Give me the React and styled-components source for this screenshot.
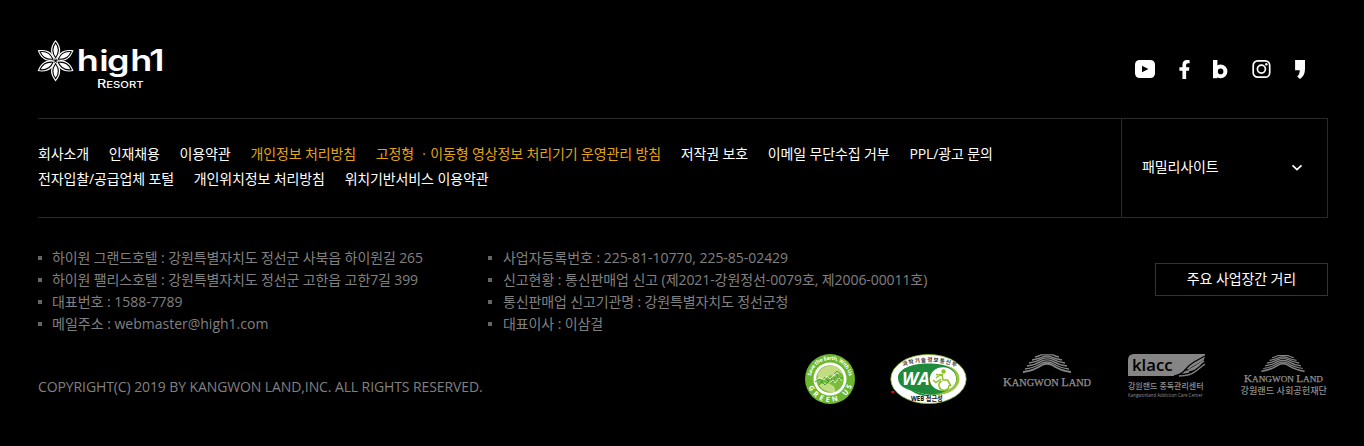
import React from 'react';
import styled, { createGlobalStyle } from 'styled-components';
import { FaFacebookF } from 'react-icons/fa';

const GlobalStyle = createGlobalStyle`
  * { box-sizing: border-box; }
  body {
    margin: 0;
    background: #000;
    color: #fff;
    font-family: "Open Sans", "Noto Sans CJK KR", sans-serif;
    font-size: 14px;
  }
  ul { list-style: none; margin: 0; padding: 0; }
  a { color: inherit; text-decoration: none; }
  svg { display: block; flex: none; overflow: visible; }
`;

const Footer = styled.footer`
  height: 446px;
  padding: 0 36px 0 38px;
  background: #000;
`;

const Top = styled.div`
  display: flex;
  justify-content: space-between;
  align-items: flex-start;
  height: 118px;
  padding: 40px 22px 0 0;
`;

const Social = styled.ul`
  display: flex;
  align-items: center;
  margin-top: 19px;
  gap: 22px;
`;

const SocialItem = styled.li`
  display: flex;
  justify-content: center;
  width: ${(p) => p.$w}px;
  color: #fff;
`;

const LinkBar = styled.div`
  display: flex;
  height: 100px;
  border: 1px solid #2a2a2a;
  border-left: 0;
`;

const Links = styled.ul`
  display: flex;
  flex: 1;
  flex-wrap: wrap;
  align-content: flex-start;
  column-gap: 19.8px;
  padding-top: 22px;
`;

const LinkItem = styled.li`
  line-height: 25px;
  letter-spacing: -0.13px;
  white-space: nowrap;
  color: ${(p) => (p.$accent ? '#e3a412' : '#fff')};
`;

const Family = styled.button`
  display: flex;
  align-items: center;
  justify-content: space-between;
  width: 206px;
  padding: 0 24px 4px 20px;
  border: 0;
  border-left: 1px solid #2a2a2a;
  background: none;
  color: #fff;
  font: inherit;
  letter-spacing: -0.13px;
`;

const Info = styled.div`
  display: flex;
  padding-top: 29px;
`;

const InfoList = styled.ul`
  width: ${(p) => p.$w}px;
`;

const InfoItem = styled.li`
  display: flex;
  align-items: center;
  gap: ${(p) => p.$gap || 10}px;
  height: 22px;
  line-height: 22px;
  letter-spacing: ${(p) => p.$tracking}px;
  color: #808080;
  white-space: nowrap;

  &::before {
    content: "";
    width: 4px;
    height: 4px;
    background: #666;
  }
`;

const Distance = styled.a`
  width: 173px;
  height: 33px;
  margin: 16px 0 0 auto;
  border: 1px solid #333;
  line-height: 30px;
  letter-spacing: -0.1px;
  text-align: center;
`;

const Bottom = styled.div`
  display: flex;
  justify-content: space-between;
  align-items: flex-start;
  padding-top: 19px;
`;

const Copyright = styled.p`
  margin: 23px 0 0;
  line-height: 20px;
  letter-spacing: -0.1px;
  color: #808080;
`;

const Marks = styled.div`
  display: flex;
  align-items: flex-start;
`;

const Mark = styled.div`
  margin-left: ${(p) => p.$gap || 0}px;
`;

const Label = styled.text`
  font-family: ${(p) => p.$family || '"Open Sans", "Noto Sans CJK KR", sans-serif'};
  font-size: ${(p) => p.$size}px;
  font-weight: ${(p) => p.$weight || 400};
  font-style: ${(p) => (p.$italic ? 'italic' : 'normal')};
  fill: ${(p) => p.$color || '#fff'};
`;

const SmallCap = styled.tspan`
  font-size: ${(p) => p.$size}px;
`;

const petalAngles = [0, 60, 120, 180, 240, 300];

function Logo() {
  return (
    <svg width="126" height="50" viewBox="0 0 126 50" role="img">
      <g transform="translate(17.6 20.7)">
        {petalAngles.map((a) => (
          <g key={a} transform={`rotate(${a})`}>
            <path d="M0 -1C-5.6 -6 -6.6 -13 0 -20.7C6.6 -13 5.6 -6 0 -1Z" fill="#fff" />
            <path d="M0 -3C-3.6 -8 -3.9 -13 0 -18C3.9 -13 3.6 -8 0 -3Z" fill="#fff" stroke="#000" strokeWidth="1.1" />
          </g>
        ))}
      </g>
      <g transform="scale(1.22 1)">
        <Label x="31.800 50.200 56.500 75.600 91.300" y="31" $size="29.5" $weight="600" $family="Inter, sans-serif">high1</Label>
      </g>
      <Label x="59" y="47.700" $size="11.500" $weight="500" textLength="46.500" lengthAdjust="spacingAndGlyphs" $family="Inter, sans-serif">
        R<SmallCap $size={9}>ESORT</SmallCap>
      </Label>
    </svg>
  );
}

function YoutubeIcon() {
  return (
    <svg width="20" height="20" viewBox="0 0 20 20">
      <path fillRule="evenodd" fill="#fff" d="M5 1H15Q20 1 20 6V14Q20 19 15 19H5Q0 19 0 14V6Q0 1 5 1ZM7 6.700V13.300L13.400 10Z" />
    </svg>
  );
}

function BandIcon() {
  return (
    <svg width="15" height="20" viewBox="0 0 15 20">
      <rect x="0" y="1" width="4.400" height="18.200" fill="#fff" />
      <circle cx="7.600" cy="12.400" r="4.800" fill="none" stroke="#fff" strokeWidth="4" />
    </svg>
  );
}

function InstagramIcon() {
  return (
    <svg width="19" height="20" viewBox="0 0 19 20" fill="none" stroke="#fff" strokeWidth="1.700">
      <rect x="1.200" y="1.900" width="16.500" height="16.300" rx="4.500" />
      <circle cx="9.400" cy="10.100" r="4" />
      <circle cx="14.300" cy="5.300" r="1.200" fill="#fff" stroke="none" />
    </svg>
  );
}

function StoryIcon() {
  return (
    <svg width="11" height="20" viewBox="0 0 11 20">
      <path fill="#fff" d="M.1 1H10V9.800C10 14.500 8.500 17.700 5 20L2.200 17.500C4.100 15.800 4.700 13.900 4.800 11.300H.1Z" />
    </svg>
  );
}

function Chevron() {
  return (
    <svg width="12" height="8" viewBox="0 0 12 8">
      <path d="M1.500 3.300L6 7.600L10.500 3.300" fill="none" stroke="#fff" strokeWidth="1.700" />
    </svg>
  );
}

function GreenMark() {
  return (
    <svg width="50" height="50" viewBox="0 0 50 50">
      <defs>
        <path id="green-top" d="M5.800 25A19.200 19.200 0 0 1 44.200 25" />
        <path id="green-bottom" d="M2 25A23 23 0 0 0 48 25" />
      </defs>
      <circle cx="25" cy="25" r="25" fill="#6cb72f" />
      <circle cx="25" cy="25" r="16.500" fill="#fff" />
      <circle cx="25" cy="25" r="13.800" fill="#79bd3a" />
      <path d="M12.500 20Q17 11.500 26 11.500Q35 12 38 21L35 19L31 23L25 21L20 25L13 25ZM14 31Q20 27 27 31Q31 33 30 38Q19 39 14 31Z" fill="#c3dc82" />
      <path d="M10 28L14 25L17 28L20 23L23 27L26 24L28 28L32 20L34 26L38 23M14 31L17 28L20 31L24 27M29 20L32 17L36 20" fill="none" stroke="#3c9a3c" strokeWidth=".9" />
      <path d="M11 26L15 23.500L19 26L22 22L25 25L30 20M24 29L28 26L30 29L34 24L37 27" fill="none" stroke="#eef6dc" strokeWidth=".8" />
      <Label $size="5.200" $weight="700"><textPath href="#green-top" startOffset="3" textLength="54">Save the Earth, With Us</textPath></Label>
      <Label $size="7.200" $weight="700"><textPath href="#green-bottom" startOffset="8" textLength="57">GREEN US</textPath></Label>
    </svg>
  );
}

function WebMark() {
  return (
    <svg width="78" height="50" viewBox="0 0 78 50">
      <defs>
        <path id="web-top" d="M9.500 13.800Q39 1.800 68.500 13.800" />
      </defs>
      <ellipse cx="38.500" cy="25" rx="37.700" ry="24.500" fill="#fff" stroke="#8cbc32" strokeWidth=".8" />
      <path d="M38 9.500C57 9.500 68 15 68 25C68 36 57 41 43 41C38 41 32 40 27 38C16 36 8 32 8 24C8 15 21 9.500 38 9.500Z" fill="#1f8a3c" />
      <path d="M20 36Q32 39 40 42.500Q29 42.500 20 36Z" fill="#1f8a3c" />
      <ellipse cx="53" cy="25" rx="13.200" ry="11.800" fill="#fff" />
      <path d="M55 11C64 13 70 18 69.500 26C68 36 56 42.500 41 40.500C51 40 65 36 66.500 25.500C67 19 63 14 55 11Z" fill="#9cc63c" />
      <Label x="12" y="31" $size="17.500" $weight="700" $italic textLength="27.500" lengthAdjust="spacingAndGlyphs">WA</Label>
      <circle cx="53.500" cy="17.500" r="2.200" fill="#8fc31f" />
      <path d="M52 20L53 26H57.500L61 32M46 20.500L52 21.500M51 25L46 28.500L43 26M51.500 27A5 5 0 1 0 59 31M51 20L46 24" fill="none" stroke="#8fc31f" strokeWidth="1.500" />
      <Label $size="5.600" $weight="700" $color="#333"><textPath href="#web-top" startOffset="4" textLength="54">과학기술정보통신부</textPath></Label>
      <Label x="21" y="46.700" $size="7" $weight="700" $color="#111" textLength="31.500" lengthAdjust="spacingAndGlyphs">WEB 접근성</Label>
      <rect x="1.300" y="37" width="3" height="2" fill="#e60012" />
    </svg>
  );
}

function Roof({ x, y, scale }) {
  return (
    <g transform={`translate(${x} ${y}) scale(${scale})`} fill="none" stroke="#858585" strokeWidth="1.350">
      <path d="M-12 3Q-9 2.500 -6 .8H6Q9 2.500 12 3" />
      <path d="M-15 6Q-9 5 -4 2.800Q0 1.500 4 2.800Q9 5 15 6" />
      <path d="M-18 9Q-11 8 -5 4.800Q0 3 5 4.800Q11 8 18 9" />
      <path d="M-20 12Q-12 11 -5 6.800Q0 5 5 6.800Q12 11 20 12" />
      <path d="M-22 15Q-13 14 -5 9Q0 7 5 9Q13 14 22 15" />
      <path d="M-24 18Q-14 17 -5 11Q0 8.500 5 11Q14 17 24 18" strokeWidth="1.800" />
    </g>
  );
}

const serif = '"Liberation Serif", serif';

function LandName({ x, y, width, size }) {
  return (
    <Label
      x={x}
      y={y}
      $size={size - 2}
      $family={serif}
      $color="#929292"
      stroke="#929292"
      strokeWidth=".25"
      textLength={width}
      lengthAdjust="spacingAndGlyphs"
    >
      <SmallCap $size={size}>K</SmallCap>ANGWON <SmallCap $size={size}>L</SmallCap>AND
    </Label>
  );
}

function KangwonMark() {
  return (
    <svg width="88" height="34" viewBox="0 0 88 34">
      <Roof x={44} y={0} scale={1} />
      <LandName x={0} y={31.500} width={88} size={12.500} />
    </svg>
  );
}

function KlaccMark() {
  return (
    <svg width="78" height="46" viewBox="0 0 78 46">
      <path d="M6 0H77V3Q74 11 67 16Q60 20 51 20L48 22H0V6Q0 0 6 0Z" fill="#858585" />
      <path d="M46 22Q53 21 57 16Q61 11 66 8L77 2M57 16Q61 17 65 13L77 6M61 18Q67 17 70 14L77 10" fill="none" stroke="#000" strokeWidth="1.300" />
      <path d="M51 22Q62 22 68 17L77 10M60 17L76 7" fill="none" stroke="#858585" strokeWidth="1.500" />
      <Label x="4" y="16.500" $size="16" $weight="600" $color="#000" textLength="40.500" lengthAdjust="spacingAndGlyphs">klacc</Label>
      <Label x="0" y="35" $size="8" $weight="500" $color="#909090" textLength="75.500" lengthAdjust="spacingAndGlyphs">강원랜드 중독관리센터</Label>
      <Label x="0" y="43" $size="4.800" $color="#909090" textLength="74.500" lengthAdjust="spacingAndGlyphs">Kangwonland Addiction Care Center</Label>
    </svg>
  );
}

function FoundationMark() {
  return (
    <svg width="88" height="46" viewBox="0 0 88 46">
      <Roof x={43} y={1} scale={0.9} />
      <LandName x={4} y={28.200} width={79} size={11} />
      <Label x="0.500" y="39.500" $size="9.500" $weight="500" $color="#909090" textLength="86.500" lengthAdjust="spacingAndGlyphs">강원랜드 사회공헌재단</Label>
    </svg>
  );
}

const links = [
  ['회사소개'],
  ['인재채용'],
  ['이용약관'],
  ['개인정보 처리방침', true],
  ['고정형 ㆍ이동형 영상정보 처리기기 운영관리 방침', true],
  ['저작권 보호'],
  ['이메일 무단수집 거부'],
  ['PPL/광고 문의'],
  ['전자입찰/공급업체 포털'],
  ['개인위치정보 처리방침'],
  ['위치기반서비스 이용약관'],
];

const hotelInfo = [
  ['하이원 그랜드호텔 : 강원특별자치도 정선군 사북읍 하이원길 265', -0.12],
  ['하이원 팰리스호텔 : 강원특별자치도 정선군 고한읍 고한7길 399', -0.12],
  ['대표번호 : 1588-7789', -0.03],
  ['메일주소 : webmaster@high1.com', 0],
];

const businessInfo = [
  ['사업자등록번호 : 225-81-10770, 225-85-02429', -0.04],
  ['신고현황 : 통신판매업 신고 (제2021-강원정선-0079호, 제2006-00011호)', -0.08],
  ['통신판매업 신고기관명 : 강원특별자치도 정선군청', -0.13],
  ['대표이사 : 이삼걸', -0.1],
];

export default function App() {
  return (
    <>
      <GlobalStyle />
      <Footer>
        <Top>
          <Logo />
          <Social>
            <SocialItem $w={20}><YoutubeIcon /></SocialItem>
            <SocialItem $w={14}><FaFacebookF size={19} /></SocialItem>
            <SocialItem $w={15}><BandIcon /></SocialItem>
            <SocialItem $w={23}><InstagramIcon /></SocialItem>
            <SocialItem $w={11}><StoryIcon /></SocialItem>
          </Social>
        </Top>
        <LinkBar>
          <Links>
            {links.map(([text, accent]) => (
              <LinkItem key={text} $accent={accent}><a href="#">{text}</a></LinkItem>
            ))}
          </Links>
          <Family type="button">패밀리사이트<Chevron /></Family>
        </LinkBar>
        <Info>
          <InfoList $w={450}>
            {hotelInfo.map(([t, tracking]) => <InfoItem key={t} $tracking={tracking}>{t}</InfoItem>)}
          </InfoList>
          <InfoList $w={480}>
            {businessInfo.map(([t, tracking]) => <InfoItem key={t} $gap={11} $tracking={tracking}>{t}</InfoItem>)}
          </InfoList>
          <Distance href="#">주요 사업장간 거리</Distance>
        </Info>
        <Bottom>
          <Copyright>COPYRIGHT(C) 2019 BY KANGWON LAND,INC. ALL RIGHTS RESERVED.</Copyright>
          <Marks>
            <Mark><GreenMark /></Mark>
            <Mark $gap={35}><WebMark /></Mark>
            <Mark $gap={35}><KangwonMark /></Mark>
            <Mark $gap={37}><KlaccMark /></Mark>
            <Mark $gap={34}><FoundationMark /></Mark>
          </Marks>
        </Bottom>
      </Footer>
    </>
  );
}
